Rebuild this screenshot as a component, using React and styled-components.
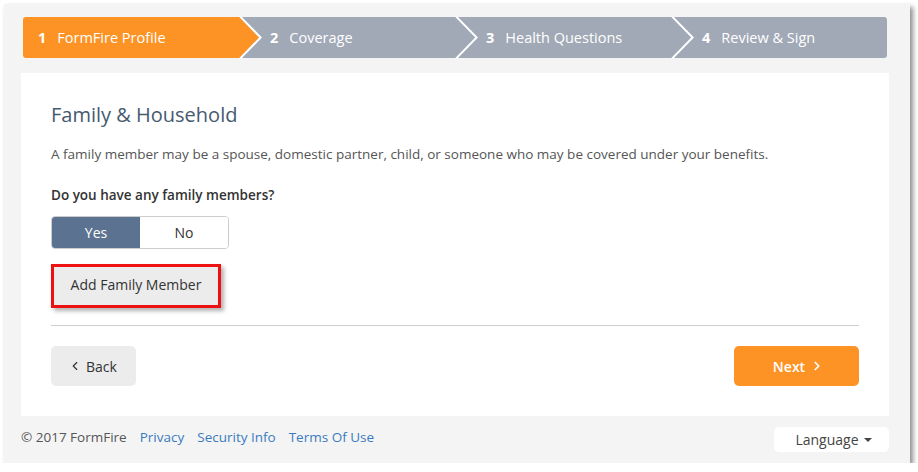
import styled, { createGlobalStyle } from 'styled-components';
import { ChevronLeft, ChevronRight } from 'lucide-react';

const GlobalStyle = createGlobalStyle`
  html, body {
    margin: 0;
    padding: 0;
    background: #ffffff;
  }
  body {
    font-family: "Open Sans", "Liberation Sans", sans-serif;
    color: #333;
  }
`;

const Frame = styled.div`
  margin: 4px 0 0 4px;
  width: 906px;
  height: 459px;
  box-sizing: border-box;
  background: #f4f4f4;
  box-shadow: 3px 3px 5px rgba(0, 0, 0, 0.45);
  padding: 13px 21px 0 17px;
  display: flex;
  flex-direction: column;
`;

const Steps = styled.ol`
  list-style: none;
  margin: 0 2px 0 2px;
  padding: 0;
  display: flex;
  height: 41px;
  border-radius: 3px;
  overflow: hidden;
`;

const Step = styled.li`
  position: relative;
  flex: none;
  width: 25%;
  box-sizing: border-box;
  display: flex;
  align-items: center;
  gap: 11px;
  padding-left: ${(p) => (p.$first ? '15px' : '31px')};
  background: ${(p) => (p.$active ? '#fd9325' : '#a1a9b6')};
  color: #fff;
  font-size: 14.5px;

  /* white chevron stroke between steps */
  &::before {
    content: ${(p) => (p.$last ? 'none' : '""')};
    position: absolute;
    top: 0;
    right: -23px;
    width: 23px;
    height: 100%;
    background: #fff;
    clip-path: polygon(0 0, 3px 0, 23px 50%, 3px 100%, 0 100%, 20px 50%);
    z-index: 2;
  }

  /* arrow tip in this step's colour */
  &::after {
    content: ${(p) => (p.$last ? 'none' : '""')};
    position: absolute;
    top: 0;
    right: -20px;
    width: 20px;
    height: 100%;
    background: inherit;
    clip-path: polygon(0 0, 20px 50%, 0 100%);
    z-index: 2;
  }
`;

const StepNum = styled.span`
  font-weight: 700;
`;

const Card = styled.section`
  margin-top: 15px;
  background: #fff;
  padding: 30px;
  height: 343px;
  box-sizing: border-box;
  display: flex;
  flex-direction: column;
`;

const Title = styled.h2`
  margin: 0;
  font-size: 20px;
  line-height: 24px;
  font-weight: 400;
  color: #465a70;
`;

const Lead = styled.p`
  margin: 18px 0 0;
  font-size: 13.5px;
  line-height: 18px;
  color: #555;
`;

const Question = styled.div`
  margin-top: 22px;
  font-size: 13.5px;
  line-height: 20px;
  font-weight: 600;
  color: #333;
`;

const Toggle = styled.div`
  margin-top: 11px;
  display: flex;
  width: 178px;
  height: 33px;
  border: 1px solid #ccc;
  border-radius: 4px;
  overflow: hidden;
  box-sizing: border-box;
`;

const ToggleOption = styled.button`
  flex: 1;
  border: none;
  margin: 0;
  font-family: inherit;
  font-size: 14px;
  background: ${(p) => (p.$on ? '#5b7290' : '#fff')};
  color: ${(p) => (p.$on ? '#fff' : '#333')};
`;

const AddButton = styled.button`
  margin-top: 15px;
  align-self: flex-start;
  width: 170px;
  height: 44px;
  box-sizing: border-box;
  border: 3px solid #ee1111;
  padding: 0 0 3px;
  background: #ececec;
  font-family: inherit;
  font-size: 14px;
  color: #333;
  box-shadow: 3px 3px 4px rgba(0, 0, 0, 0.3);
`;

const Divider = styled.hr`
  margin: 17px 0 0;
  border: none;
  border-top: 1px solid #cfcfcf;
`;

const Actions = styled.div`
  margin-top: 20px;
  display: flex;
  justify-content: space-between;
`;

const NavButton = styled.button`
  width: ${(p) => p.$width}px;
  height: 40px;
  border: none;
  border-radius: 5px;
  display: flex;
  align-items: center;
  justify-content: center;
  gap: ${(p) => (p.$primary ? '5px' : '4px')};
  padding: ${(p) => (p.$primary ? '0 0 0 4px' : '0 2px 0 0')};
  font-family: inherit;
  font-size: 14px;
  font-weight: ${(p) => (p.$primary ? 600 : 400)};
  background: ${(p) => (p.$primary ? '#fd9325' : '#ececec')};
  color: ${(p) => (p.$primary ? '#fff' : '#333')};
`;

const Footer = styled.footer`
  display: flex;
  align-items: center;
  justify-content: space-between;
  padding: 11px 0 0 0;
`;

const FooterLinks = styled.div`
  display: flex;
  gap: 13px;
  font-size: 13.5px;
  color: #555;
  margin-top: -5px;
`;

const FooterLink = styled.a`
  color: #3a7bc0;
  text-decoration: none;
`;

const Language = styled.button`
  width: 115px;
  height: 25px;
  border: none;
  border-radius: 5px;
  background: #fff;
  font-family: inherit;
  font-size: 14px;
  color: #444;
  display: flex;
  align-items: center;
  justify-content: center;
  gap: 5px;
  padding-left: 10px;
`;

const Caret = styled.span`
  width: 0;
  height: 0;
  border-left: 4px solid transparent;
  border-right: 4px solid transparent;
  border-top: 4px solid #444;
`;

const steps = ['FormFire Profile', 'Coverage', 'Health Questions', 'Review & Sign'];

export default function App() {
  return (
    <>
      <GlobalStyle />
      <Frame>
        <Steps>
          {steps.map((label, i) => (
            <Step key={label} $first={i === 0} $last={i === steps.length - 1} $active={i === 0}>
              <StepNum>{i + 1}</StepNum>
              <span>{label}</span>
            </Step>
          ))}
        </Steps>

        <Card>
          <Title>Family &amp; Household</Title>
          <Lead>
            A family member may be a spouse, domestic partner, child, or someone who may be covered under your
            benefits.
          </Lead>
          <Question>Do you have any family members?</Question>
          <Toggle>
            <ToggleOption $on>Yes</ToggleOption>
            <ToggleOption>No</ToggleOption>
          </Toggle>
          <AddButton>Add Family Member</AddButton>
          <Divider />
          <Actions>
            <NavButton $width={85}>
              <ChevronLeft size={14} strokeWidth={2} />
              Back
            </NavButton>
            <NavButton $width={125} $primary>
              Next
              <ChevronRight size={14} strokeWidth={3} />
            </NavButton>
          </Actions>
        </Card>

        <Footer>
          <FooterLinks>
            <span>© 2017 FormFire</span>
            <FooterLink href="#">Privacy</FooterLink>
            <FooterLink href="#">Security Info</FooterLink>
            <FooterLink href="#">Terms Of Use</FooterLink>
          </FooterLinks>
          <Language>
            Language
            <Caret />
          </Language>
        </Footer>
      </Frame>
    </>
  );
}
